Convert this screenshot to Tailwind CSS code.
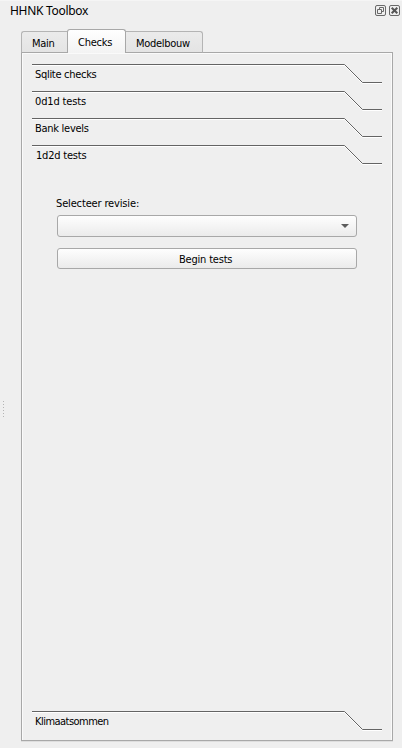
<!DOCTYPE html>
<html lang="nl">
<head>
<meta charset="utf-8">
<title>HHNK Toolbox</title>
<script src="https://cdn.jsdelivr.net/npm/@tailwindcss/browser@4"></script>
</head>
<body class="bg-[#efefef]">
<svg class="hidden">
  <symbol id="edge" viewBox="0 0 350 20">
    <path d="M0 1.5H312.5L330.5 19.5H350" fill="none" stroke="#fff"/>
    <path d="M0 .5H312.5L330.5 18.5H350" fill="none" stroke="#646464"/>
  </symbol>
</svg>
<div class="w-[402px] h-[748px] flex flex-col overflow-hidden border-t border-[#f5f5f5] bg-[#efefef] text-black text-[11px] leading-[14px] font-['DejaVu_Sans_Condensed','DejaVu_Sans',sans-serif] [font-stretch:condensed] whitespace-nowrap">
  <header class="h-7 flex shrink-0 items-start justify-between pl-[10px] pr-[2px]">
    <h1 class="font-['Noto_Sans',sans-serif] text-[12px] leading-[18px] pt-px tracking-[-0.3px]">HHNK Toolbox</h1>
    <div class="flex gap-[3px] pt-1">
      <svg width="11" height="11" viewBox="0 0 11 11" fill="none" stroke="#686868"><rect x=".5" y=".5" width="10" height="10" rx="1.5"/><path d="M4.5 4.5V2.5H8.5V6.5H6.5M2.5 4.5H6.5V8.5H2.5Z"/></svg>
      <svg width="11" height="11" viewBox="0 0 11 11" fill="none" stroke="#686868"><rect x=".5" y=".5" width="10" height="10" rx="1.5"/><path d="M2.7 2.7L8.3 8.3M8.3 2.7L2.7 8.3" stroke-width="2" stroke="#555"/></svg>
    </div>
  </header>
  <div class="flex flex-1 min-h-0">
    <div class="w-[21px] shrink-0 flex flex-col gap-[2px] pl-[3px] pt-[372px]">
      <i class="size-px bg-[#b4b4b4]"></i><i class="size-px bg-[#b4b4b4]"></i><i class="size-px bg-[#b4b4b4]"></i><i class="size-px bg-[#b4b4b4]"></i><i class="size-px bg-[#b4b4b4]"></i><i class="size-px bg-[#b4b4b4]"></i>
    </div>
    <main class="w-[372px] flex flex-col">
      <nav class="flex items-end h-6 -mb-px relative">
        <div class="w-[46px] h-[22px] border border-r-0 border-[#b4b4b4] border-b-[#a8a8a8] rounded-tl-[3px] bg-linear-to-b from-[#ebebeb] to-[#e4e4e4] pl-[10px] pt-[5px] tracking-[-0.3px]">Main</div>
        <div class="w-[59px] h-6 border border-b-0 border-[#a8a8a8] rounded-t-[3px] bg-linear-to-b from-white to-[#f3f3f3] pl-[10px] pt-[6px] tracking-[-0.25px]">Checks</div>
        <div class="w-[77px] h-[22px] border border-l-0 border-[#b4b4b4] border-b-[#a8a8a8] rounded-tr-[3px] bg-linear-to-b from-[#ebebeb] to-[#e4e4e4] pl-[10px] pt-[5px] tracking-[-0.3px]">Modelbouw</div>
      </nav>
      <section class="h-[689px] border border-[#a8a8a8] shadow-[0_1px_0_#dedede,inset_1px_1px_0_#fafafa,inset_-1px_0_0_#fafafa] flex flex-col pt-[11px] pl-[10px]">
        <div class="h-[27px] grid w-[350px]"><svg class="col-start-1 row-start-1" width="350" height="20"><use href="#edge"/></svg><span class="col-start-1 row-start-1 pl-[3px] pt-[4px] tracking-[-0.3px]">Sqlite checks</span></div>
        <div class="h-[27px] grid w-[350px]"><svg class="col-start-1 row-start-1" width="350" height="20"><use href="#edge"/></svg><span class="col-start-1 row-start-1 pl-[3px] pt-[4px] tracking-[-0.15px]">0d1d tests</span></div>
        <div class="h-[27px] grid w-[350px]"><svg class="col-start-1 row-start-1" width="350" height="20"><use href="#edge"/></svg><span class="col-start-1 row-start-1 pl-[3px] pt-[4px] tracking-[-0.28px]">Bank levels</span></div>
        <div class="h-[27px] grid w-[350px]"><svg class="col-start-1 row-start-1" width="350" height="20"><use href="#edge"/></svg><span class="col-start-1 row-start-1 pl-[4px] pt-[4px] tracking-[-0.2px]">1d2d tests</span></div>
        <div class="flex-1 flex flex-col items-start pl-[25px] pt-[25px]">
          <label class="h-[18px] -ml-px tracking-[-0.15px]">Selecteer revisie:</label>
          <div class="w-[300px] h-[22px] border border-[#a8a8a8] rounded-[3px] bg-linear-to-b from-[#fefefe] to-[#ebebeb] flex items-center justify-end pr-[7px]">
            <svg width="8" height="4" viewBox="0 0 8 4"><path d="M0 0H8L4 4Z" fill="#5c5c5c"/></svg>
          </div>
          <button class="mt-[11px] w-[300px] h-[21px] border border-[#a8a8a8] rounded-[3px] bg-linear-to-b from-[#fefefe] to-[#ebebeb] flex pl-[121px] pt-[4px] tracking-[-0.2px]">Begin tests</button>
        </div>
        <div class="h-[29px] grid w-[350px]"><svg class="col-start-1 row-start-1" width="350" height="20"><use href="#edge"/></svg><span class="col-start-1 row-start-1 pl-[3px] pt-[4px] tracking-[-0.53px]">Klimaatsommen</span></div>
      </section>
    </main>
  </div>
</div>
</body>
</html>
